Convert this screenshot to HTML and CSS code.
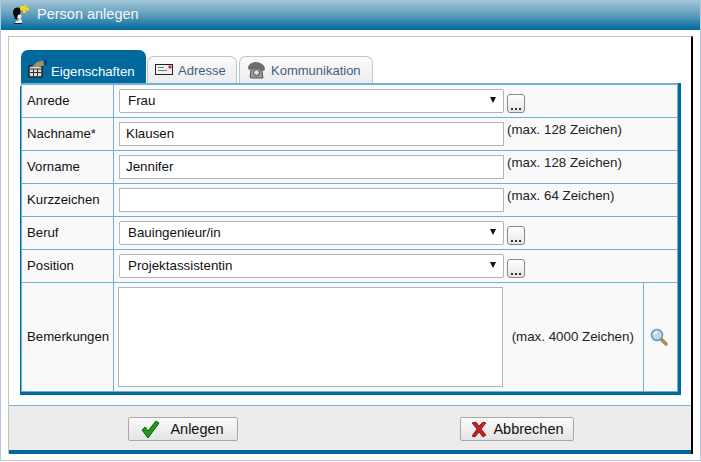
FILE: index.html
```html
<!DOCTYPE html>
<html lang="de">
<head>
<meta charset="utf-8">
<title>Person anlegen</title>
<link rel="stylesheet" href="styles.css">
</head>
<body>
<div class="window">
  <header class="titlebar">
    <svg class="title-icon" width="17" height="20" viewBox="0 0 17 20"><path d="M2 11C0 8 1 3 5 2.500c2.500-.3 4.500.8 5 2.500L8 7l1 3-2 2 1 2H3z" fill="#0b0b0b"/><path d="M6 10l3-1 .5 3L8 14l2 1v3H3l1-2h2l1-2-2-1z" fill="#ececec"/><path d="M2 18h8v1H2z" fill="#222"/><path d="M9 1h3V0h2v2.500h3v3h-3V8h-3V5.500H8V2.500z" fill="#f7d31c"/></svg>
    <span>Person anlegen</span>
  </header>
  <div class="dialog">
    <main class="content">
      <nav class="tabs">
        <div class="tab active">
          <svg width="19" height="18" viewBox="0 0 19 18"><rect x="1" y="6" width="13" height="11" fill="#ddd" stroke="#222" stroke-width="1.500"/><path d="M2 9h11M5.500 9v7M9.500 9v7M2 12.500h11" stroke="#333"/><path d="M4 7l5-5 6-1.500 1 5-6 1.500z" fill="#a8906a"/><rect x="16" y="0" width="3" height="5" fill="#123a8c"/></svg>
          <span>Eigenschaften</span>
        </div>
        <div class="tab second">
          <svg width="18" height="12" viewBox="0 0 18 12"><rect x=".5" y=".5" width="17" height="10" fill="#f2f2f2" stroke="#222"/><path d="M3 3.500h6M3 6.500h9" stroke="#777"/><rect x="13.500" y="1.500" width="3" height="3" fill="#c33"/></svg>
          <span>Adresse</span>
        </div>
        <div class="tab third">
          <svg width="19" height="17" viewBox="0 0 19 17"><path d="M1 6c0-4 5-6 8-6 4 0 9 3 9 7l-1 2-4-1-1-2H7L6 7 2 8z" fill="#6f6f6f"/><path d="M4 8l2-2h6l3 3 1 7H4l-1-1z" fill="#9a9a9a" stroke="#555"/><circle cx="9.500" cy="10.500" r="3" fill="#ddd" stroke="#444"/></svg>
          <span>Kommunikation</span>
        </div>
      </nav>
      <table class="form">
        <colgroup><col class="c1"><col class="c2"><col class="c3"><col class="c4"></colgroup>
        <tr>
          <th>Anrede</th>
          <td colspan="3"><div class="field">
            <div class="select"><span>Frau</span><i class="arrow"></i></div>
            <button class="more" type="button"><b></b><b></b><b></b></button>
          </div></td>
        </tr>
        <tr>
          <th>Nachname*</th>
          <td colspan="3"><div class="field top">
            <div class="input">Klausen</div><span class="hint">(max. 128 Zeichen)</span>
          </div></td>
        </tr>
        <tr>
          <th>Vorname</th>
          <td colspan="3"><div class="field top">
            <div class="input">Jennifer</div><span class="hint">(max. 128 Zeichen)</span>
          </div></td>
        </tr>
        <tr>
          <th>Kurzzeichen</th>
          <td colspan="3"><div class="field top">
            <div class="input"></div><span class="hint">(max. 64 Zeichen)</span>
          </div></td>
        </tr>
        <tr>
          <th>Beruf</th>
          <td colspan="3"><div class="field">
            <div class="select"><span>Bauingenieur/in</span><i class="arrow"></i></div>
            <button class="more" type="button"><b></b><b></b><b></b></button>
          </div></td>
        </tr>
        <tr>
          <th>Position</th>
          <td colspan="3"><div class="field">
            <div class="select"><span>Projektassistentin</span><i class="arrow"></i></div>
            <button class="more" type="button"><b></b><b></b><b></b></button>
          </div></td>
        </tr>
        <tr class="tall">
          <th>Bemerkungen</th>
          <td class="memo"><div class="textarea"></div></td>
          <td class="hint-cell">(max. 4000 Zeichen)</td>
          <td class="zoom-cell">
            <svg width="18" height="18" viewBox="0 0 18 18"><path d="M10.500 10.500l5.500 5.500" stroke="#b08a55" stroke-width="3.500" stroke-linecap="round"/><circle cx="7" cy="7" r="5.500" fill="#bcd8ef" stroke="#6f93b5" stroke-width="1.500"/><path d="M4 6.500c.5-1.500 1.500-2 3-2.200" stroke="#fff" stroke-width="1.500" fill="none"/></svg>
          </td>
        </tr>
      </table>
    </main>
    <footer class="footer">
      <button class="action ok" type="button">
        <svg width="20" height="20" viewBox="0 0 20 20"><path d="M1 11l3-3 3 4 8-10 3 2-11 15z" fill="#1f9a1f" stroke="#0b5f0b"/></svg>
        <span>Anlegen</span>
      </button>
      <button class="action cancel" type="button">
        <svg width="18" height="18" viewBox="0 0 18 18"><path d="M2 3l4-1 3 4 4-4 3 1-5 6 5 6-3 2-4-5-4 5-3-1 5-7z" fill="#c51f1f" stroke="#7d1010" stroke-width=".8"/></svg>
        <span>Abbrechen</span>
      </button>
    </footer>
  </div>
</div>
</body>
</html>
```
FILE: styles.css
```css
* { box-sizing: border-box; }
html, body { margin: 0; padding: 0; background: #fff; }
body { width: 701px; height: 462px; font-family: "Liberation Sans", Arial, sans-serif; font-size: 13.330px; color: #111; overflow: hidden; }
.window { width: 701px; height: 461px; border: 1px solid #b4c8e2; border-top: 0; display: flex; flex-direction: column; background: #fff; }
.titlebar { height: 30px; flex: none; display: flex; align-items: center; gap: 8px; padding: 0 0 3px 11px; background: linear-gradient(#a3c6d8, #5f9cbc 50%, #006a9e); font-size: 14.500px; }
.title-icon { flex: none; margin-top: 3px; }
.titlebar span { color: #f2f8fb; }
.dialog { flex: none; width: 685px; height: 418px; margin: 6px 0 0 7px; border-top: 1px solid #c4c4be; border-left: 1px solid #c4c4be; border-right: 2px solid #000; display: flex; flex-direction: column; }
.content { flex: 1; padding: 13px 0 0 12px; }
.tabs { display: flex; align-items: flex-end; height: 33px; }
.tab { height: 27px; display: flex; align-items: center; border: 1px solid #b9c6d4; border-bottom: 0; border-radius: 7px 7px 0 0; background: linear-gradient(#fbfbfb, #ececec); color: #3f5f7f; font-size: 13px; }
.tab.active { height: 33px; width: 125px; padding: 9px 0 0 7px; gap: 4px; border: 0; background: #006a9e; color: #fff; font-size: 13.200px; }
.tab.active svg { margin-top: -4px; }
.second { width: 90px; margin-left: 1px; padding-left: 7px; gap: 5px; }
.third { width: 134px; margin-left: 2px; padding-left: 7px; gap: 5px; }
.form { width: 656px; border-collapse: collapse; table-layout: fixed; background: #f9f9f9; border-top: 2px solid #6fb2d6; border-left: 1px solid #6fb2d6; border-right: 1px solid #6fb2d6; box-shadow: 3px 0 0 #006a9e, 0 3px 0 #006a9e, 3px 3px 0 #006a9e, -1px 3px 0 #006a9e; }
.c1 { width: 92px; }
.c2 { width: 391px; }
.c3 { width: 139px; }
.c4 { width: 34px; }
.form tr { height: 33px; }
.form th, .form td { border: 1px solid #6fb2d6; padding: 0; font-weight: normal; text-align: left; vertical-align: middle; }
.form th { padding-left: 5px; padding-bottom: 1px; font-size: 13.200px; }
.field { display: flex; align-items: center; padding-left: 5px; gap: 3px; }
.field.top { align-items: flex-start; }
.select { width: 385px; height: 24px; display: flex; align-items: center; justify-content: space-between; padding: 0 7px 0 8px; background: #fff; border: 1px solid #b4b4b4; border-radius: 2px; }
.arrow { width: 0; height: 0; border-left: 3.500px solid transparent; border-right: 3.500px solid transparent; border-top: 6px solid #111; margin-top: -2px; }
.input { width: 385px; height: 24px; line-height: 22px; padding-left: 6px; background: #fff; border: 1px solid #b4b4b4; }
.hint { font-size: 13.330px; line-height: 16px; color: #222; }
.more { width: 18px; height: 19px; margin-top: 5px; padding: 0 0 2px; display: flex; align-items: flex-end; justify-content: center; gap: 2px; background: linear-gradient(#fff, #e6e6e6); border: 1.500px solid #8a8a8a; border-radius: 3px; }
.more b { width: 2px; height: 2px; background: #333; }
.form .tall { height: 109px; }
.form .memo { padding: 4px 0 4px 4px; border-right: 0; }
.textarea { width: 385px; height: 100px; background: #fff; border: 1px solid #b4b4b4; }
.form .hint-cell { padding-right: 2px; text-align: center; color: #222; border-left: 0; }
.zoom-cell svg { display: block; margin-left: 6px; }
.footer { flex: none; height: 49px; display: flex; align-items: flex-start; padding-top: 11px; background: #ececec; border-top: 1px solid #78b4d6; border-bottom: 4px solid #006a9e; }
.action { height: 24px; display: flex; align-items: center; justify-content: center; gap: 9px; padding: 0 1px 0 0; background: linear-gradient(#fafafa, #e4e4e4); border: 1px solid #a8a8a8; border-radius: 2px; font: 14.500px "Liberation Sans", Arial, sans-serif; color: #111; }
.ok { width: 110px; margin-left: 119px; }
.cancel { width: 114px; margin-left: 222px; gap: 5px; padding: 0; }
```
